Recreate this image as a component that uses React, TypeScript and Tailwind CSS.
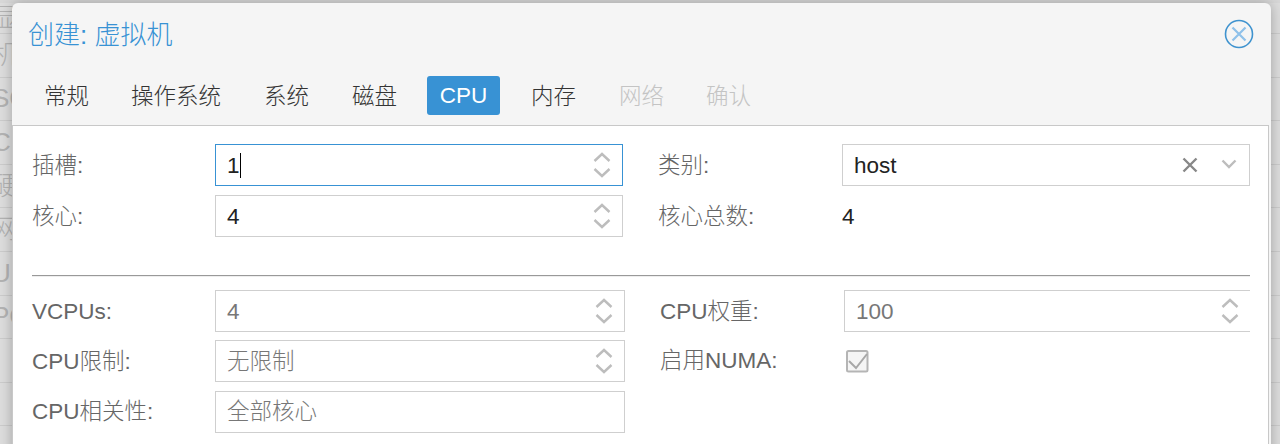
import type { ReactNode } from "react";

const TABS = [
  { label: "常规", pl: "pl-[32px]" },
  { label: "操作系统", pl: "pl-[42px]" },
  { label: "系统", pl: "pl-[43px]" },
  { label: "磁盘", pl: "pl-[43px]" },
];

const BACK_ROWS = ["显", "机", "SC", "CI", "硬", "网", "U", "PC", "", ""];

function Spinner() {
  return (
    <svg width="18" height="28" viewBox="0 0 18 28" fill="none" stroke="#bdbdbd" strokeWidth="2.4" className="shrink-0">
      <path d="M1.500 10 9 3l7.500 7" />
      <path d="M1.500 18 9 25l7.500-7" />
    </svg>
  );
}

function Field({ width, value, muted, focused, spin, noRight, flat, children }: {
  width: string;
  value: string;
  muted?: boolean;
  focused?: boolean;
  spin?: boolean;
  noRight?: boolean;
  flat?: boolean;
  children?: ReactNode;
}) {
  return (
    <div
      className={`flex h-[42px] items-center border bg-white pl-[11px] pr-[11px] ${width} ${focused ? "border-[#3892d4]" : "border-[#cfcfcf]"} ${noRight ? "border-r-0" : ""} ${muted ? "text-[#777777]" : "text-[#222222]"}`}
    >
      <span className={`leading-none ${flat ? "" : "pt-[2px]"}`}>{value}</span>
      {focused && <span className="h-[25px] w-px bg-black" />}
      <span className="flex-1" />
      {children}
      {spin && <Spinner />}
    </div>
  );
}

export default function App() {
  return (
    <div className="relative h-[444px] w-[1280px] overflow-hidden bg-[#dedede] font-['Liberation_Sans','Noto_Sans_CJK_SC',sans-serif] font-light">
      {/* page behind the dimmed mask */}
      <div className="absolute inset-0 flex flex-col">
        <div className="h-[3px] bg-[#d8d8d8]" />
        {BACK_ROWS.map((r, i) => (
          <div key={i} className={`flex shrink-0 items-center overflow-hidden border-b border-[#cdcdcd] text-[26px] text-[#b4b4b4] ${i === 0 ? "h-[31px]" : "h-[43.6px]"}`}>
            <span className="-ml-[8px] whitespace-nowrap">{r}</span>
          </div>
        ))}
      </div>

      {/* dialog */}
      <div className="absolute left-[12px] top-[3px] flex h-[460px] w-[1259px] flex-col rounded-t-[6px] bg-[#f5f5f5] shadow-[0_0_14px_rgba(0,0,0,0.28)]">
        <div className="flex h-[62px] shrink-0 items-center justify-between pl-[16px] pr-[17px]">
          <span className="pt-[1px] text-[26px] leading-none text-[#3892d4]">创建: 虚拟机</span>
          <svg width="30" height="30" viewBox="0 0 30 30" fill="none" className="mt-[-1px]">
            <circle cx="15" cy="15" r="13.500" stroke="#3f93cf" strokeWidth="1.600" />
            <path d="M8.500 8.500l13 13M21.500 8.500l-13 13" stroke="#8fc1ea" strokeWidth="2.200" />
          </svg>
        </div>

        <div className="mt-[11px] flex h-[39px] shrink-0 items-center text-[22.500px] leading-none text-[#333333]">
          {TABS.map((t) => (
            <span key={t.label} className={`${t.pl} pt-[3px]`}>{t.label}</span>
          ))}
          <span className="ml-[30px] flex h-[39px] w-[73px] items-center justify-center rounded-[3px] bg-[#3892d4] pt-[2px] text-white">CPU</span>
          <span className="pl-[31px] pt-[3px]">内存</span>
          <span className="pl-[43px] pt-[3px] text-[#c4c4c4]">网络</span>
          <span className="pl-[42px] pt-[3px] text-[#c4c4c4]">确认</span>
        </div>

        <div className="mr-[2px] mt-[10px] flex-1 border border-[#c8c8c8] bg-white pl-[19px] pr-[18px] pt-[18px] text-[22.500px] text-[#666666]">
          <div className="flex h-[42px] items-center">
            <span className="w-[183px] pt-[2px]">插槽:</span>
            <Field width="w-[408px]" value="1" focused spin />
            <span className="ml-[35px] w-[184px] pt-[2px]">类别:</span>
            <Field width="w-[408px]" value="host">
              <svg width="16" height="16" viewBox="0 0 16 16" fill="none" stroke="#888888" strokeWidth="2.400" className="mr-[23.500px]">
                <path d="M1.500 1.500l13 13M14.500 1.500l-13 13" />
              </svg>
              <svg width="16" height="10" viewBox="0 0 16 10" fill="none" stroke="#bdbdbd" strokeWidth="2.400" className="mb-[2px] mr-[1px]">
                <path d="M1.500 1.500 8 8l6.500-6.500" />
              </svg>
            </Field>
          </div>
          <div className="mt-[9px] flex h-[42px] items-center">
            <span className="w-[183px] pt-[2px]">核心:</span>
            <Field width="w-[408px]" value="4" spin />
            <span className="ml-[35px] w-[184px] pt-[2px]">核心总数:</span>
            <span className="pt-[2px] text-[#222222]">4</span>
          </div>

          <div className="mt-[38px] h-[2px] border-b border-t border-b-[#eeeeee] border-t-[#999999]" />

          <div className="mt-[13px] flex">
            <div className="flex w-[593px] flex-col gap-[8px]">
              <div className="flex h-[42px] items-center">
                <span className="w-[183px] pt-[2px]">VCPUs:</span>
                <Field width="w-[410px]" value="4" muted spin />
              </div>
              <div className="flex h-[42px] items-center">
                <span className="w-[183px] pt-[2px]">CPU限制:</span>
                <Field width="w-[410px]" value="无限制" muted spin />
              </div>
              <div className="mt-[1px] flex h-[42px] items-center">
                <span className="w-[183px]">CPU相关性:</span>
                <Field width="w-[410px]" value="全部核心" muted flat />
              </div>
            </div>
            <div className="ml-[35px] flex flex-1 flex-col gap-[8px]">
              <div className="flex h-[42px] items-center">
                <span className="w-[184px] pt-[2px]">CPU权重:</span>
                <Field width="flex-1" value="100" muted spin noRight />
              </div>
              <div className="flex h-[42px] items-center">
                <span className="w-[186px]">启用NUMA:</span>
                <svg width="23" height="24" viewBox="0 0 23 24" fill="none" className="overflow-visible">
                  <rect x="1" y="2" width="20.500" height="20.500" rx="1.500" fill="#f5f5f5" stroke="#b5b5b5" strokeWidth="2" />
                  <path d="M3 12l7 7L21 5" stroke="#a8a8a8" strokeWidth="2" />
                </svg>
              </div>
            </div>
          </div>
        </div>
      </div>
    </div>
  );
}
